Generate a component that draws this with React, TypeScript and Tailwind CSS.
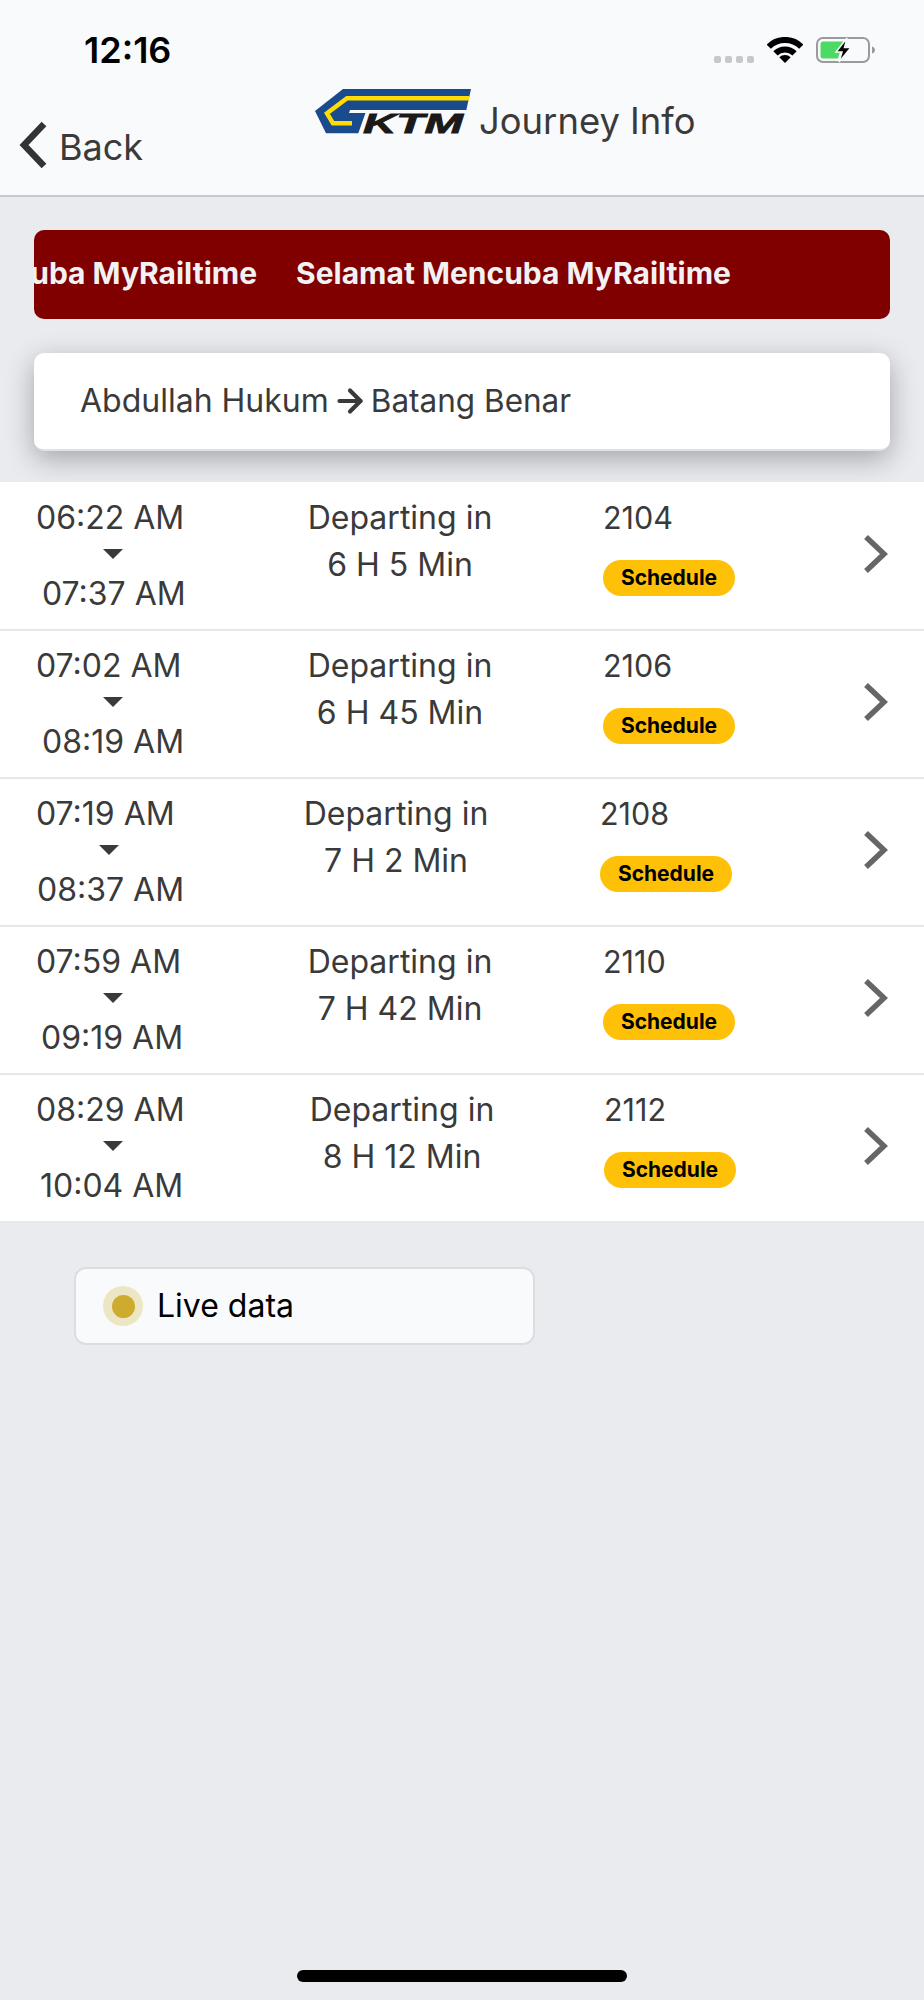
import { ArrowRight } from "lucide-react";

interface Trip {
  depart: string;
  arrive: string;
  wait: string;
  train: string;
  arriveOffset: string;
  arrowOffset: string;
  waitCol: string;
  trainCol: string;
}

const trips: Trip[] = [
  { depart: "06:22 AM", arrive: "07:37 AM", wait: "6 H 5 Min", train: "2104", arriveOffset: "ml-[6px]", arrowOffset: "ml-[67px]", waitCol: "ml-[30px]", trainCol: "ml-[100px]" },
  { depart: "07:02 AM", arrive: "08:19 AM", wait: "6 H 45 Min", train: "2106", arriveOffset: "ml-[6px]", arrowOffset: "ml-[67px]", waitCol: "ml-[30px]", trainCol: "ml-[100px]" },
  { depart: "07:19 AM", arrive: "08:37 AM", wait: "7 H 2 Min", train: "2108", arriveOffset: "ml-[1px]", arrowOffset: "ml-[63px]", waitCol: "ml-[26px]", trainCol: "ml-[101px]" },
  { depart: "07:59 AM", arrive: "09:19 AM", wait: "7 H 42 Min", train: "2110", arriveOffset: "ml-[5px]", arrowOffset: "ml-[67px]", waitCol: "ml-[30px]", trainCol: "ml-[100px]" },
  { depart: "08:29 AM", arrive: "10:04 AM", wait: "8 H 12 Min", train: "2112", arriveOffset: "ml-[4px]", arrowOffset: "ml-[67px]", waitCol: "ml-[32px]", trainCol: "ml-[99px]" },
];

function WifiGlyph() {
  return (
    <svg width="36" height="26" viewBox="0 0 36 26">
      <path d="M1.7 9.7A23 23 0 0 1 34.3 9.7" fill="none" stroke="#000" strokeWidth="6" />
      <path d="M8.45 16.45A13.5 13.5 0 0 1 27.55 16.45" fill="none" stroke="#000" strokeWidth="6" />
      <path d="M18 26L12.3 20.3A8 8 0 0 1 23.7 20.3Z" fill="#000" />
    </svg>
  );
}

function BatteryGlyph() {
  return (
    <svg width="60" height="26" viewBox="0 0 60 26">
      <rect x="1" y="1" width="52" height="24" rx="6" fill="none" stroke="#9a9a9a" strokeWidth="2" />
      <path d="M56 9.5C58 10 59 11.5 59 13C59 14.5 58 16 56 16.5Z" fill="#9a9a9a" />
      <path d="M7 4.5H27L22 21.5H7C5.5 21.5 4.5 20.5 4.5 19V7C4.5 5.5 5.5 4.5 7 4.5Z" fill="#4cd964" />
      <path d="M31 1L20 15H26L23 25L35 10.5H28.5Z" fill="#000" stroke="#f9fafc" strokeWidth="1.5" />
    </svg>
  );
}

function KtmLogo() {
  return (
    <svg width="160" height="46" viewBox="0 0 160 46" className="shrink-0 overflow-visible">
      <polygon points="29,1 157,1 152,23.5 52,23.5 44.3,45.3 12,45.3 1,23" fill="#1a4b8c" />
      <polygon points="36,22 152.5,22 152,25 35,25" fill="#f9fafc" />
      <polyline points="155,10.3 33,10.3 13,25.3 19,35.3 38,35.3" fill="none" stroke="#ffdd00" strokeWidth="4.5" />
      <text
        x="49"
        y="45.3"
        textLength="100"
        lengthAdjust="spacingAndGlyphs"
        fontSize="27"
        stroke="#1a1a1a"
        strokeWidth="0.8"
        className="fill-[#1a1a1a] font-['Liberation_Sans',sans-serif] font-bold italic"
      >
        KTM
      </text>
    </svg>
  );
}

function TripRow({ trip }: { trip: Trip }) {
  return (
    <div className="flex h-[148px] border-b-2 border-[#e6e7ea] bg-white pl-[36px] text-[#3a3a3a]">
      <div className="flex w-[231px] shrink-0 flex-col pt-[15px] text-[32px]">
        <span className="h-[40px] leading-[40px]">{trip.depart}</span>
        <div
          className={`mt-[11px] h-0 w-0 border-x-[10px] border-t-[10px] border-x-transparent border-t-[#3a3a3a] ${trip.arrowOffset}`}
        />
        <span className={`mt-[15px] h-[40px] leading-[40px] ${trip.arriveOffset}`}>{trip.arrive}</span>
      </div>
      <div className={`flex w-[206px] shrink-0 flex-col items-center pt-[15px] text-[32px] ${trip.waitCol}`}>
        <span className="h-[47px] leading-[40px]">Departing in</span>
        <span className="leading-[40px]">{trip.wait}</span>
      </div>
      <div className={`flex shrink-0 flex-col items-start pt-[15px] ${trip.trainCol}`}>
        <span className="h-[40px] text-[30.5px] leading-[40px]">{trip.train}</span>
        <span className="mt-[22px] flex h-[36px] w-[132px] items-center justify-center rounded-full bg-[#ffc107] text-[21px] font-bold text-black">
          Schedule
        </span>
      </div>
      <div className="ml-auto flex items-center pr-[36px] pb-[4px]">
        <svg width="26" height="42" viewBox="0 0 26 42">
          <polyline points="4,4 22,21 4,38" fill="none" stroke="#666" strokeWidth="5.5" />
        </svg>
      </div>
    </div>
  );
}

export default function App() {
  return (
    <div className="flex h-[2000px] w-[924px] flex-col overflow-hidden bg-[#e9ebef] font-['Inter',sans-serif]">
      <header className="h-[197px] shrink-0 border-b-2 border-[#c8c8cc] bg-[#f9fafc]">
        <div className="flex h-[88px] pt-[30px] pr-[48px] pl-[84px]">
          <span className="text-[36px] leading-[40px] font-semibold text-black">12:16</span>
          <div className="ml-auto flex items-start pt-[7px]">
            <div className="mt-[19px] mr-[13px] flex gap-[4px]">
              <span className="size-[7px] rounded-[2px] bg-[#c7c7cc]" />
              <span className="size-[7px] rounded-[2px] bg-[#c7c7cc]" />
              <span className="size-[7px] rounded-[2px] bg-[#c7c7cc]" />
              <span className="size-[7px] rounded-[2px] bg-[#c7c7cc]" />
            </div>
            <WifiGlyph />
            <div className="ml-[13px]">
              <BatteryGlyph />
            </div>
          </div>
        </div>
        <div className="flex items-start pl-[18px] text-[#3a3a3a]">
          <svg width="30" height="50" viewBox="0 0 30 50" className="mt-[32px] shrink-0">
            <polyline points="26,4 6,25 26,46" fill="none" stroke="#333" strokeWidth="6.5" />
          </svg>
          <span className="mt-[37px] ml-[11px] w-[255px] shrink-0 text-[36px] leading-[44px]">Back</span>
          <KtmLogo />
          <span className="mt-[11px] ml-[5px] text-[36.4px] leading-[44px]">Journey Info</span>
        </div>
      </header>

      <main className="flex flex-col">
        <div className="mx-[34px] mt-[33px] flex h-[89px] items-center justify-end gap-[39px] overflow-hidden rounded-[10px] bg-[#800000] pr-[159px] pb-[2px] text-[30px] font-bold whitespace-nowrap text-[#f2f2f4]">
          <span className="shrink-0">Selamat Mencuba MyRailtime</span>
          <span className="shrink-0">Selamat Mencuba MyRailtime</span>
        </div>
        <div className="mx-[34px] mt-[34px] flex h-[98px] items-center gap-[8px] rounded-[10px] border-b-2 border-[#dfe3e8] bg-white pl-[46px] text-[32px] text-[#3a3a3a] shadow-[0_8px_28px_rgba(0,0,0,0.3)]">
          <span>Abdullah Hukum</span>
          <ArrowRight size={36} strokeWidth={2.8} className="-mx-[5px] shrink-0" />
          <span className="text-[31.5px]">Batang Benar</span>
        </div>

        <div className="mt-[31px] bg-white pt-[1px]">
          {trips.map((trip) => (
            <TripRow key={trip.train} trip={trip} />
          ))}
        </div>

        <div className="mt-[44px] ml-[74px] flex h-[78px] w-[461px] items-center rounded-[12px] border-2 border-[#dcdde0] bg-[#f9fafc] pl-[27px]">
          <span className="flex size-[40px] items-center justify-center rounded-full bg-[#ede6c4]">
            <span className="size-[23px] rounded-full bg-[#ccab2e]" />
          </span>
          <span className="ml-[14px] text-[32px] text-black">Live data</span>
        </div>
      </main>

      <div className="mt-auto mb-[18px] ml-[297px] h-[12px] w-[330px] rounded-full bg-black" />
    </div>
  );
}
